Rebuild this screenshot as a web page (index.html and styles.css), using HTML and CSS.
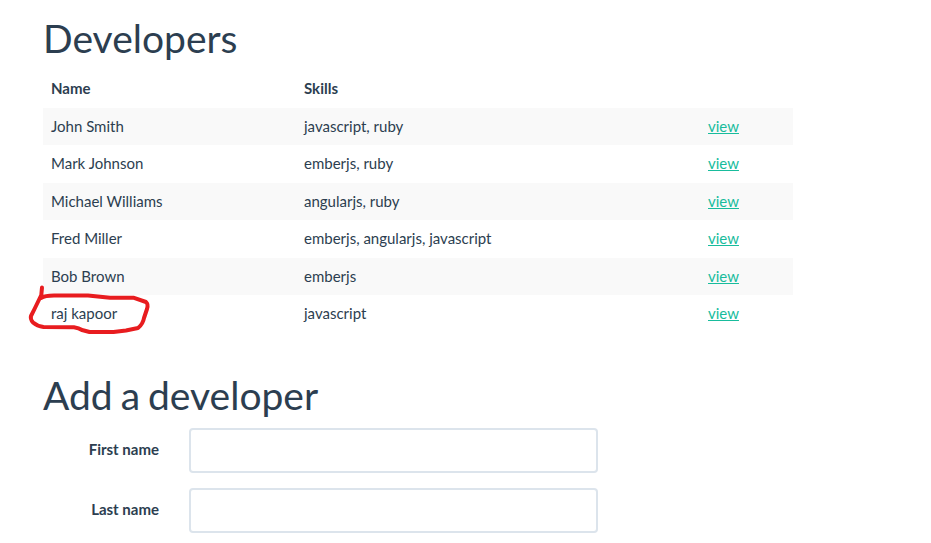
FILE: index.html
```html
<!DOCTYPE html>
<html lang="en">
<head>
<meta charset="utf-8">
<title>Developers</title>
<link rel="stylesheet" href="styles.css">
</head>
<body>
<main class="container">
<h1 class="title">Developers</h1>
<table class="table">
<thead><tr><th class="name">Name</th><th class="skills">Skills</th><th></th></tr></thead>
<tbody>
<tr><td>John Smith</td><td>javascript, ruby</td><td><a href="#">view</a></td></tr>
<tr><td>Mark Johnson</td><td>emberjs, ruby</td><td><a href="#">view</a></td></tr>
<tr><td>Michael Williams</td><td>angularjs, ruby</td><td><a href="#">view</a></td></tr>
<tr><td>Fred Miller</td><td>emberjs, angularjs, javascript</td><td><a href="#">view</a></td></tr>
<tr><td>Bob Brown</td><td>emberjs</td><td><a href="#">view</a></td></tr>
<tr><td class="marked">raj kapoor<svg class="mark" width="130" height="54" viewBox="25 284 130 54"><path d="M42 287.5 L41.3 295 L35 308 L31 316 Q30 319 33 322.5 Q37 326 43.5 327 L74 327.3 Q79 328 82 330 L89.500 332 L113.500 332 L126 330.500 L138 328 Q143 324 144 318 L147 309 Q148.500 304 146 302 L133.300 297.700 L110 297.700 L88 295.500 L54 295.500 Q45 295.500 41 298"/></svg></td><td>javascript</td><td><a href="#">view</a></td></tr>
</tbody>
</table>
<h1 class="title title-add">Add a developer</h1>
<form class="form">
<div class="row"><label for="first">First name</label><input id="first" type="text"></div>
<div class="row"><label for="last">Last name</label><input id="last" type="text"></div>
</form>
</main>
</body>
</html>
```
FILE: styles.css
```css
* { box-sizing: border-box; }
body {
  margin: 0;
  overflow: hidden;
  background: #fff;
  color: #2c3e50;
  font: 15px/21.5px Lato, sans-serif;
}
.container { width: 750px; margin-left: 43px; padding-top: 17px; }
.title { margin: 0; font-size: 39px; line-height: 43px; font-weight: 400; }
.title-add { word-spacing: -2px; }
.table {
  width: 750px;
  margin: 10px 0 41px;
  border-collapse: collapse;
  table-layout: fixed;
}
th, td { height: 37.5px; padding: 8px; text-align: left; line-height: 21.5px; }
.name { width: 253px; }
.skills { width: 404px; }
tbody tr:nth-child(odd) { background: #f9f9f9; }
a { color: #18bc9c; text-decoration: underline; }
.marked { position: relative; }
.mark { position: absolute; left: -18px; top: -11px; }
.mark path { fill: none; stroke: #e81c1f; stroke-width: 4; stroke-linecap: round; stroke-linejoin: round; }
.form { margin-top: 11px; }
.row { display: flex; margin-bottom: 15px; }
label { width: 116px; margin-right: 30px; padding-top: 11px; text-align: right; font-weight: 700; }
input { width: 409px; height: 45px; border: 2px solid #dce4ec; border-radius: 4px; background: #fff; }
```
